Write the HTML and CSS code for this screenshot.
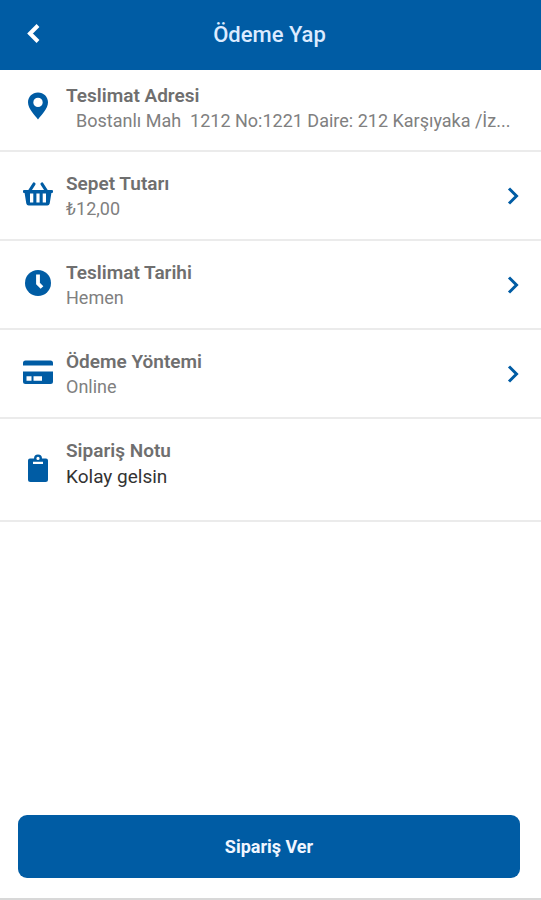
FILE: index.html
```html
<!DOCTYPE html>
<html lang="tr">
<head>
<meta charset="utf-8">
<meta name="viewport" content="width=device-width, initial-scale=1">
<title>Ödeme Yap</title>
<link rel="stylesheet" href="styles.css">
</head>
<body>
<header class="topbar">
  <button class="back" type="button" aria-label="Geri">
    <svg width="14" height="20" viewBox="0 0 14 20"><path d="M11 1.500 3 9.500l8 8" fill="none" stroke="currentColor" stroke-width="4"/></svg>
  </button>
  <h1 class="title">Ödeme Yap</h1>
</header>
<main class="list">
  <section class="row row-first">
    <svg class="icon" viewBox="0 0 30 30"><path fill-rule="evenodd" d="M15 1.500C9.300 1.500 5 5.800 5 11.300 5 18 12 24.500 15 28.500c3-4 10-10.500 10-17.200C25 5.800 20.700 1.500 15 1.500ZM15 6.700a4.700 4.700 0 1 1 0 9.400 4.700 4.700 0 0 1 0-9.400Z"/></svg>
    <div class="text">
      <h2 class="label">Teslimat Adresi</h2>
      <p class="value address">Bostanlı Mah&nbsp; 1212 No:1221 Daire: 212 Karşıyaka /İz...</p>
    </div>
  </section>
  <button class="row" type="button">
    <svg class="icon" viewBox="0 0 30 30"><path d="m6.500 12 4.500-7M23.500 12l-4.500-7" fill="none" stroke="currentColor" stroke-width="3.200" stroke-linecap="round"/><path fill-rule="evenodd" d="M1 11h28a1 1 0 0 1 1 1v1a1 1 0 0 1-1 1h-.6l-1.700 10.500a2.500 2.500 0 0 1-2.500 2H5.800a2.500 2.500 0 0 1-2.500-2L1.600 14H1a1 1 0 0 1-1-1v-1a1 1 0 0 1 1-1ZM7 14.500v9h3.300v-9ZM13.400 14.500v9h3.200v-9ZM19.700 14.500v9H23v-9Z"/></svg>
    <span class="text"><span class="label">Sepet Tutarı</span><span class="value">₺12,00</span></span>
    <svg class="chevron" viewBox="0 0 12 18"><path d="m2 1.500 7.500 7.500L2 16.500"/></svg>
  </button>
  <button class="row" type="button">
    <svg class="icon" viewBox="0 0 30 30"><circle cx="15" cy="15" r="13"/><path d="M15 6.500v9l4 4" fill="none" stroke="#fff" stroke-width="3.800"/></svg>
    <span class="text"><span class="label">Teslimat Tarihi</span><span class="value">Hemen</span></span>
    <svg class="chevron" viewBox="0 0 12 18"><path d="m2 1.500 7.500 7.500L2 16.500"/></svg>
  </button>
  <button class="row" type="button">
    <svg class="icon" viewBox="0 0 30 30"><path fill-rule="evenodd" d="M2.500 3.500h25A2.500 2.500 0 0 1 30 6v2.500H0V6a2.500 2.500 0 0 1 2.500-2.500ZM0 14.500h30v10a2.500 2.500 0 0 1-2.500 2.500h-25A2.500 2.500 0 0 1 0 24.500ZM3.500 19.300v4.500h5v-4.500ZM10.500 19.300v4.500H19v-4.500Z"/></svg>
    <span class="text"><span class="label">Ödeme Yöntemi</span><span class="value">Online</span></span>
    <svg class="chevron" viewBox="0 0 12 18"><path d="m2 1.500 7.500 7.500L2 16.500"/></svg>
  </button>
  <section class="row row-note">
    <svg class="icon" viewBox="0 0 30 30"><path fill-rule="evenodd" d="M7 4.500h4a4 4 0 0 1 8 0h4A2 2 0 0 1 25 6.500v19a2.500 2.500 0 0 1-2.500 2.500h-15A2.500 2.500 0 0 1 5 25.500v-19A2 2 0 0 1 7 4.500ZM15 2.800a1.600 1.600 0 1 0 0 3.200 1.600 1.600 0 0 0 0-3.200ZM10 7.800v2.200h10V7.800Z"/></svg>
    <div class="text">
      <label class="label" for="note">Sipariş Notu</label>
      <input class="note" id="note" type="text" value="Kolay gelsin">
    </div>
  </section>
</main>
<footer class="footer">
  <button class="submit" type="button">Sipariş Ver</button>
</footer>
</body>
</html>
```

FILE: styles.css
```css
* {
  box-sizing: border-box;
}

body {
  margin: 0;
  min-height: 100vh;
  display: flex;
  flex-direction: column;
  background: #fff;
  color: #6f6f6f;
  font-family: Roboto, "Liberation Sans", sans-serif;
  font-size: 18px;
}

button,
input {
  font: inherit;
  color: inherit;
  background: none;
  border: 0;
  padding: 0;
  margin: 0;
}

.topbar {
  display: grid;
  grid-template-columns: 40px 1fr 40px;
  align-items: center;
  height: 70px;
  padding: 0 16px 2px 14px;
  background: #005ca4;
  color: #fff;
}

.back {
  display: flex;
  align-items: center;
  justify-content: center;
  height: 40px;
}

.title {
  margin: 0;
  text-align: center;
  font-size: 22px;
  font-weight: 500;
  color: #dcebff;
}

.list {
  flex: 1;
}

.row {
  display: flex;
  align-items: center;
  gap: 13px;
  width: 100%;
  padding: 19px 22px 18px 23px;
  border-bottom: 2px solid #ebebeb;
  text-align: left;
}

.row-first {
  padding-top: 13px;
  padding-bottom: 17px;
}

.row-note {
  padding-bottom: 30px;
}

.icon {
  flex: none;
  width: 30px;
  height: 30px;
  margin-bottom: 4px;
  fill: #005ca4;
  color: #005ca4;
}

.row-note .icon {
  margin: 10px 0 0;
}

.text {
  flex: 1;
  min-width: 0;
  display: flex;
  flex-direction: column;
}

.label,
.value {
  margin: 0;
  line-height: 25px;
}

.label {
  font-size: 19px;
  font-weight: 600;
}

.value {
  font-size: 18px;
  color: #808080;
}

.address {
  padding-left: 10px;
  white-space: nowrap;
  overflow: hidden;
  text-overflow: ellipsis;
}

.chevron {
  flex: none;
  width: 12px;
  height: 18px;
  fill: none;
  stroke: #005ca4;
  stroke-width: 3;
}

.note {
  width: 100%;
  height: 27px;
  font-size: 19px;
  color: #333;
}

.footer {
  padding: 0 21px 20px 18px;
  border-bottom: 2px solid #d8d8d8;
}

.submit {
  width: 100%;
  height: 63px;
  border-radius: 9px;
  background: #005ca4;
  color: #f0f6ff;
  font-size: 18px;
  font-weight: 700;
}
```
